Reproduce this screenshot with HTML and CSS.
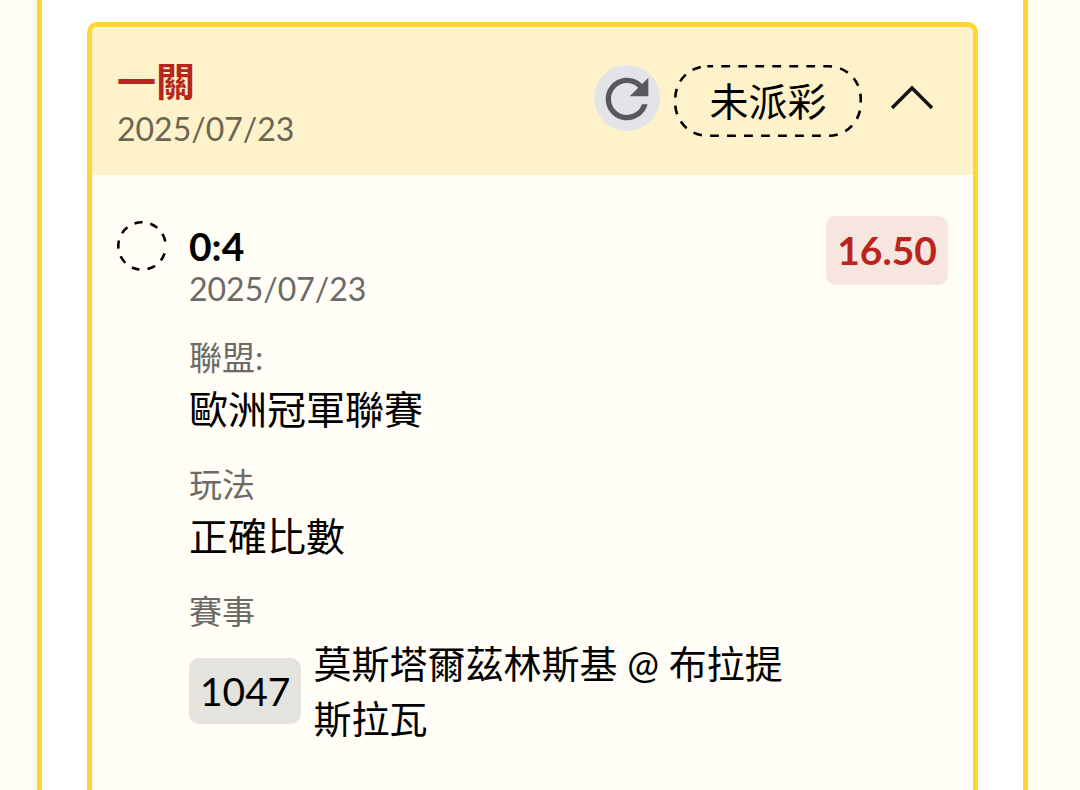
FILE: index.html
```
<!DOCTYPE html>
<html lang="zh-Hant">
<head>
    <meta charset="UTF-8">
    <meta name="viewport" content="width=device-width, initial-scale=1.0">
    <title>投注紀錄</title>
    <link rel="stylesheet" href="styles.css">
</head>
<body>
    <main class="panel">
        <article class="ticket">
            <header class="ticket-header">
                <div class="ticket-info">
                    <h1>一關</h1>
                    <time class="date" datetime="2025-07-23">2025/07/23</time>
                </div>
                <div class="actions">
                    <button type="button" class="refresh" aria-label="重新整理">
                        <svg width="64" height="64" viewBox="0 0 24 24" fill="#58595b">
                            <path d="M17.65 6.35A7.958 7.958 0 0 0 12 4c-4.42 0-7.99 3.58-7.99 8s3.57 8 7.99 8c3.73 0 6.84-2.55 7.73-6h-2.08A5.99 5.99 0 0 1 12 18c-3.31 0-6-2.69-6-6s2.69-6 6-6c1.66 0 3.14.69 4.22 1.78L13 11h7V4l-2.35 2.35z"/>
                        </svg>
                    </button>
                    <div class="status">
                        <svg class="status-outline" width="188" height="72" fill="none" stroke="#000" stroke-width="2.6">
                            <rect x="1.3" y="1.3" width="185.4" height="69.4" rx="32" stroke-dasharray="8.8 8.2" stroke-dashoffset="3"/>
                        </svg>
                        <span>未派彩</span>
                    </div>
                    <button type="button" class="toggle" aria-label="收合" aria-expanded="true">
                        <svg width="44" height="28" viewBox="0 0 44 28" fill="none" stroke="#111" stroke-width="3.4">
                            <path d="M2 24L22 4l20 20"/>
                        </svg>
                    </button>
                </div>
            </header>

            <section class="leg">
                <svg class="leg-state" width="50" height="50" viewBox="0 0 50 50" fill="none" stroke="#000" stroke-width="2.6">
                    <circle cx="25" cy="25" r="23.7" transform="rotate(18 25 25)" stroke-dasharray="8 8 8 8 8 8 8 8 8 8 8 8 8 8 8 8 8 20"/>
                </svg>
                <div class="leg-body">
                    <h2>0:4</h2>
                    <time class="date" datetime="2025-07-23">2025/07/23</time>
                    <dl>
                        <div class="field">
                            <dt>聯盟:</dt>
                            <dd>歐洲冠軍聯賽</dd>
                        </div>
                        <div class="field">
                            <dt>玩法</dt>
                            <dd>正確比數</dd>
                        </div>
                        <div class="field">
                            <dt>賽事</dt>
                            <dd class="match">
                                <span class="match-no">1047</span>
                                <span class="match-teams">莫斯塔爾茲林斯基 @ 布拉提斯拉瓦</span>
                            </dd>
                        </div>
                    </dl>
                </div>
                <span class="odds">16.50</span>
            </section>
        </article>
    </main>
</body>
</html>
```
FILE: styles.css
```
* {
    box-sizing: border-box;
}
body {
    margin: 0;
    background-color: #fffdf5;
    font-family: Lato, "Noto Sans CJK TC", sans-serif;
    font-size: 39px;
    color: #000;
}
h1, h2, dl, dd {
    margin: 0;
    font-size: 39px;
}
button {
    border: none;
    background: none;
    padding: 0;
    cursor: pointer;
}
svg {
    display: block;
}
.panel {
    display: flex;
    min-height: 100vh;
    margin: 0 52px 0 37px;
    padding: 22px 45px 0;
    background-color: #fff;
    border: solid #fdd631;
    border-width: 0 5px;
}
.ticket {
    flex: 1;
    border: 5px solid #fdd631;
    border-bottom: none;
    border-radius: 10px 10px 0 0;
    background-color: #fffdf5;
}
.ticket-header {
    display: flex;
    justify-content: space-between;
    align-items: center;
    height: 148px;
    padding: 0 25px;
    background-color: #fef2cb;
    border-radius: 5px 5px 0 0;
}
.ticket-info {
    padding-top: 4px;
}
h1 {
    margin-bottom: 3px;
    line-height: 48px;
    color: #b9251c;
}
.date {
    display: block;
    font-size: 32px;
    line-height: 42px;
    color: #6b6a66;
}
.ticket-header .date {
    color: #6b6553;
}
.actions {
    display: flex;
    align-items: flex-start;
    gap: 14px;
}
.refresh {
    display: flex;
    justify-content: center;
    align-items: center;
    width: 66px;
    height: 66px;
    padding-top: 2px;
    border-radius: 50%;
    background-color: #e3e4e8;
}
.status {
    position: relative;
    width: 188px;
    line-height: 72px;
    text-align: center;
}
.status-outline {
    position: absolute;
    top: 0;
    left: 0;
}
.toggle {
    display: flex;
    justify-content: center;
    align-items: center;
    width: 72px;
    height: 66px;
}
.leg {
    display: flex;
    align-items: flex-start;
    gap: 22px;
    padding: 41px 25px;
}
.leg-state {
    flex: none;
    margin-top: 5px;
}
.leg-body {
    flex: 1;
    padding-top: 8px;
}
h2 {
    line-height: 44px;
}
dl {
    margin-top: 22px;
}
.field {
    margin-bottom: 22px;
}
dt {
    font-size: 33px;
    line-height: 50px;
    color: #6b6a66;
}
dd {
    line-height: 55px;
}
.match {
    display: flex;
    align-items: center;
    gap: 12px;
}
.match-no {
    flex: none;
    padding: 0 11px;
    line-height: 66px;
    border-radius: 10px;
    background-color: #e5e3de;
}
.match-teams {
    font-size: 38px;
}
.odds {
    padding: 0 11px;
    line-height: 69px;
    border-radius: 10px;
    background-color: #f7e6e0;
    font-weight: bold;
    color: #b9251c;
}
```
